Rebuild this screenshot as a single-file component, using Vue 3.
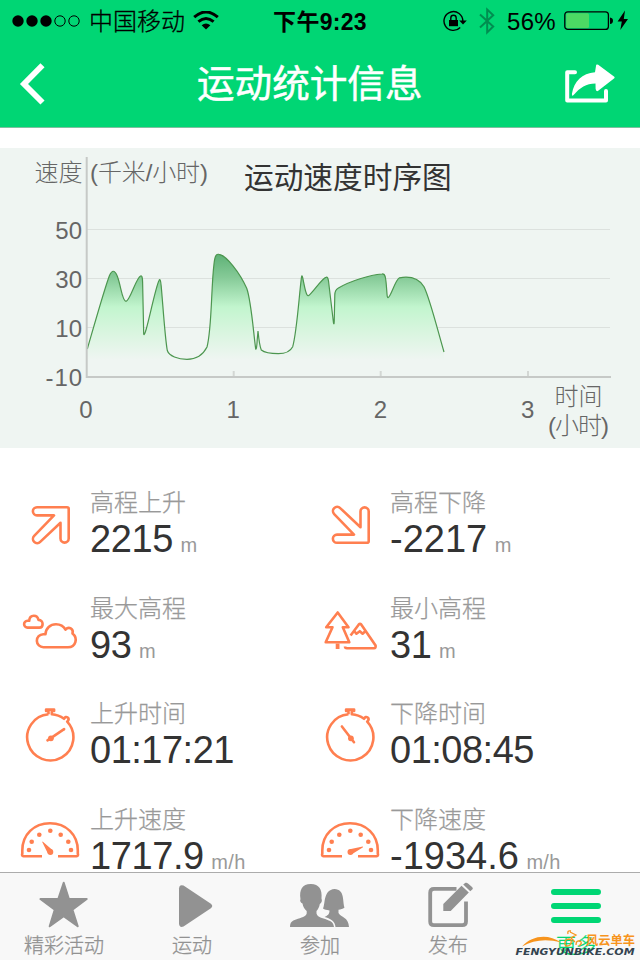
<template>
  <div class="screen">
    <header class="top">
      <div class="status-bar">
        <div class="status-left">
          <svg class="signal" width="68" height="12" viewBox="0 0 68 12">
            <circle v-for="n in 5" :key="n" :cx="6 + (n - 1) * 14" cy="6" :r="n < 4 ? 5.7 : 5.2" :class="n < 4 ? 'dot-on' : 'dot-off'" />
          </svg>
          <span class="carrier">中国移动</span>
          <svg class="wifi" width="26" height="20" viewBox="0 0 26 20">
            <path d="M1.2 6.2Q13-4.2 24.8 6.2M5.4 10.7Q13 4.4 20.6 10.7" />
            <path class="solid" d="M8.6 14.2Q13 10.8 17.4 14.2L13 18.6z" />
          </svg>
        </div>
        <div class="time">下午9:23</div>
        <div class="status-right">
          <svg width="24" height="22" viewBox="0 0 24 22" fill="none" stroke="#000" stroke-width="1.4">
            <path d="M17.2 17.5A9.4 9.4 0 1 1 19.8 11" />
            <path d="M16.2 10.4h7.6L20 14.4z" fill="#000" stroke="none" />
            <path d="M6 10h9v6.2H6z" fill="#000" stroke="none" />
            <path d="M7.8 10.5V8a2.7 2.7 0 0 1 5.4 0v2.5" />
          </svg>
          <svg class="bluetooth" width="16" height="28" viewBox="0 0 16 28">
            <path d="M1 7.5l13.2 12L8.2 25.4V2.6l6 5.6L1 20.5" />
          </svg>
          <span class="percent">56%</span>
          <svg class="battery" width="65" height="22" viewBox="0 0 65 22">
            <rect x=".8" y="1.8" width="43.6" height="17.6" rx="3" fill="none" stroke="#000" stroke-width="1.3" />
            <rect x="2.2" y="3.2" width="22.8" height="14.8" rx="1.5" fill="#4cd964" />
            <path d="M46 7.4q3 .5 3 3.300t-3 3.300z" />
            <path d="M61 .5L53.600 11.600h4.200L56.300 20 64 9h-4.200z" />
          </svg>
        </div>
      </div>
      <div class="nav-bar">
        <svg width="26" height="42" viewBox="0 0 26 42">
          <path d="M23.500 2.300L5 21l18.500 18.500" fill="none" stroke="#fff" stroke-width="5.800" />
        </svg>
        <h1>运动统计信息</h1>
        <svg width="52" height="42" viewBox="0 0 52 42">
          <path d="M11 9.200H3.200V37.400H42V28" fill="none" stroke="#fff" stroke-width="4" stroke-linecap="round" stroke-linejoin="round" />
          <path d="M32.200 1.800Q33.200 1 34.200 1.800L50.300 13.800Q51 14.500 50.300 15.200L34.200 27.800Q32 29 31.600 25.800L31.500 20.400C22 20.400 16 24.500 9.600 32Q7.600 34 8 30.500C10 18.500 18 10 31 9.200z" fill="#fff" />
        </svg>
      </div>
    </header>

    <main class="content">
      <section class="chart">
        <svg width="640" height="300" viewBox="0 0 640 300">
          <defs>
            <linearGradient id="speedFill" gradientUnits="userSpaceOnUse" x1="0" y1="106" x2="0" y2="212">
              <stop offset="0" stop-color="#5eb176" />
              <stop offset=".22" stop-color="#85ca97" />
              <stop offset=".5" stop-color="#c2f5ce" />
              <stop offset=".75" stop-color="#daf5e0" />
              <stop offset="1" stop-color="#eff5f2" />
            </linearGradient>
          </defs>
          <path v-for="tick in yTicks" :key="tick.label" class="grid-line" :d="`M87 ${tick.y}H610`" />
          <path :d="speedCurve + 'V226H87.300z'" fill="url(#speedFill)" />
          <path :d="speedCurve" class="curve" />
          <path class="axis" d="M86.700 9V229H611" />
          <path class="tick" d="M233.700 223v5M380.700 223v5M528 223v5" />
          <g class="axis-text" text-anchor="end">
            <text v-for="tick in yTicks" :key="tick.label" x="82" :y="tick.y + 9">{{ tick.label }}</text>
            <text x="82" y="238" textLength="36.500">-10</text>
          </g>
          <g class="axis-text" text-anchor="middle">
            <text v-for="n in 4" :key="n" :x="86 + (n - 1) * 147.2" y="270">{{ n - 1 }}</text>
            <text x="578.500" y="257">时间</text>
            <text x="578.500" y="286" textLength="61">(小时)</text>
          </g>
          <text class="axis-text" x="34.500" y="33">速度</text>
          <text class="axis-text" x="90" y="33" textLength="118">(千米/小时)</text>
          <text class="chart-title" x="244" y="40">运动速度时序图</text>
        </svg>
      </section>

      <section class="stats">
        <div v-for="item in stats" :key="item.label" class="stat">
          <svg class="stat-icon" width="60" height="60" viewBox="0 0 60 60">
            <g v-if="item.icon === 'up' || item.icon === 'down'" :transform="item.icon === 'down' ? 'translate(0 60) scale(1 -1)' : undefined">
              <path d="M17 12.200H47Q48.700 12.200 48.700 13.700V43.500a4.100 4.100 0 0 1-8.200 0V27.700L20.200 46.900a4.200 4.200 0 0 1-6-6L34 20.400H17a4.100 4.100 0 0 1 0-8.200z" />
            </g>
            <g v-else-if="item.icon === 'cloud'">
              <path d="M23.500 46.200a6.500 6.500 0 0 1-.3-13h2.300c.3-5.800 4.700-10 10.500-10 4.300 0 7.700 2 9.500 5.400 3.300-3.500 8.400-.8 7 4 5.600 4.500 3.500 13.600-4.500 13.600z" />
              <path d="M7.600 26.600a3.400 3.400 0 0 1-.2-6.800h1.800c.2-3 2-5 4.600-5s4.200 1.700 4.600 4.100c2.700-.1 4.200 1.800 4.200 4s-1.300 3.700-3.200 3.700z" />
            </g>
            <g v-else-if="item.icon === 'mountain'">
              <path d="M17.700 11.500L28.500 26.200H22.800L29.300 41.300H5.700L12.500 26.200H6.200z" />
              <path d="M17.600 42.500V48" class="trunk" />
              <path d="M30.600 34.500L38.800 23.500Q40 22.200 41.200 23.500L55.600 44.600Q56 47.100 54 47.200H27Q25 47.200 25 45.500M34.500 30.500l1.900 2.200 3.400-2.500 2.800 2.500 2.700-2.500" />
            </g>
            <g v-else-if="item.icon === 'watchUp' || item.icon === 'watchDown'">
              <path d="M28.500 8.300V5h-2.400V3.600h8V5h-2.300v3.300Q38.500 8.800 44 12.800q1.500-2.800 4-1.100 1.500 1.700-.8 3.900A23.100 23.100 0 1 1 28.500 8.300" />
              <circle cx="30.900" cy="32.300" r="2.900" class="solid" />
              <path :d="item.icon === 'watchUp' ? 'M27.500 34.300L44.100 23.200' : 'M34 36.200L21.900 20.500'" stroke-linecap="round" />
            </g>
            <g v-else>
              <path d="M22 44.300H3.500Q1.500 44 2.300 41.500V38.500C2.300 22.500 14 11.300 30 11.300S57.800 22.500 57.800 38.500v3q.8 2.500-1.300 2.800H38" />
              <circle v-for="(d, i) in gaugeDots" :key="i" :cx="d[0]" :cy="d[1]" r="2.300" class="solid" />
              <circle cx="30.400" cy="40" r="2.900" class="solid" />
              <path class="solid" :d="item.icon === 'gaugeUp' ? 'M28 41.700L22.200 29.900q.2-.8 1 0L32.700 38.300z' : 'M29.800 37.200L42.700 34.500q.7.600 0 1L32.200 42z'" />
            </g>
          </svg>
          <div class="stat-text">
            <div class="label">{{ item.label }}</div>
            <div class="value" :class="{ time: item.value.includes(':'), minus: item.value.startsWith('-') }">
              {{ item.value }}<span v-if="item.unit" class="unit">{{ item.unit }}</span>
            </div>
          </div>
        </div>
      </section>
    </main>

    <nav class="tab-bar">
      <a v-for="tab in tabs" :key="tab.name" class="tab" :class="{ active: tab.icon === 'more' }">
        <svg width="64" height="50" viewBox="0 0 64 50">
          <path v-if="tab.icon === 'star'" class="round" d="M31.700 2.800L36.900 19H54.700L40.400 29.600 45.700 46.300 31.700 36.200 17.700 46.300 22.800 29.600 8.400 19H26.300z" />
          <path v-else-if="tab.icon === 'play'" d="M19 8.500q.3-4.500 4.500-3L50.500 23.500q3.500 2.500 0 5L23.500 46.500q-4.200 1.500-4.500-3z" />
          <g v-else-if="tab.icon === 'people'">
            <path d="M2 47C2 42 4 41 8 39.500 13.500 37.500 18 36.500 18.700 33.500V31C16.500 29 15 26.500 14.500 23.500 12.500 23 11.500 20.500 12.500 19.300 11 9.500 14.500 4 22.500 4 30.500 3.700 34.500 9 33.500 18.500 34.500 21 33.500 23 31.800 24 31.300 27 30 29.500 28.500 31V33.500C29.500 37.500 34.500 38 39 39.700 44 41.500 45.500 43 46 47z" />
            <path d="M35 28.500C37.500 24 35 10 46.500 9 57 9.500 54.500 21 56.500 27.500 55 29 52.500 29.600 50.500 29.700V33C53 37.500 60.500 37 61 47H47.500C47 41 42 38.500 36.500 37 39.500 35.500 41.500 34.500 41.500 30.500 38.500 30 36.500 29.500 35 28.500z" />
          </g>
          <g v-else-if="tab.icon === 'edit'">
            <path class="line" d="M40.500 8.900H18Q14.200 8.900 14.200 12.700V41.400Q14.200 45.200 18 45.200H46.200Q50 45.200 50 41.400V21.500" />
            <path d="M27.300 31V24L45.500 5.700 52.800 12.500 34.700 31zM47.200 4.400L49.500 2.800Q50.700 2.300 52 3.400L56.300 7.200Q57.300 8.500 56.500 9.300L54.300 11.200z" />
          </g>
          <path v-else class="bars" d="M10 12H54M10 26H54M10 40H54" />
        </svg>
        <span>{{ tab.name }}</span>
      </a>
      <svg class="watermark" width="126" height="30" viewBox="0 0 126 30">
        <path d="M8 18.500C18 7.500 34 5.500 47 14.500 33 10.500 20 11.500 8 18.500z" fill="#f7941d" />
        <path d="M54 6q-1-4 3-3M56 4l6 3-5 3 4 4M51 17q-1-6 4-6 4 1 1 6-3 2-5 0M62 17q0-5 4-4 3 2-1 5" fill="none" stroke="#f7941d" stroke-width="1.300" />
        <text class="mark-cn" x="72" y="16.500" textLength="49" lengthAdjust="spacingAndGlyphs">风云单车</text>
        <text class="mark-en" x="1.500" y="26.700" textLength="119" lengthAdjust="spacingAndGlyphs">FENGYUNBIKE.COM</text>
      </svg>
    </nav>
  </div>
</template>

<script setup>
const yTicks = [
  { label: '50', y: 81.5 },
  { label: '30', y: 130.5 },
  { label: '10', y: 179.5 }
];

const speedCurve = [
  'M87.300 201C96 171 105 139 109.500 127.500Q113.300 119 117 127.500C121 137 122 153 126 153.300',
  'C130 153 136 130 140.500 128Q142.500 127 142.600 134L143.700 186C145 193 155 140 159 132.500Q160.500 129.500 161.200 138',
  'C163 158 165 190 167.300 202.500C169 208 178 211.300 187 211.300C196 211.300 203 207 207 199',
  'C212 180 211 140 214 116C215 106 217 106 219 106.300C226 107 240 125 246.700 140.300',
  'C251 152 253 180 255.700 201Q256.700 202 257.200 192L258 183Q259.500 198 261.300 202',
  'C265 205 272 205.700 278.300 205.700C286 205.700 290 204 292.700 198.700C297 183 299 148 301.500 129',
  'C302.500 122 305 149 308.300 147.700C312 146 322 130 326 129.300Q328 128.500 328.500 133L333.500 175',
  'Q334.300 178 334.300 170L334.800 147Q335 142 338 140.300C350 133 370 127 382 126Q384.500 125.700 385.300 129',
  'C387 137 386.500 150 388 149.700C391 149 395 132 399.500 129.800C407 128.500 418 129 424 138.700C430 151 437 180 444 204'
].join('');

const stats = [
  { icon: 'up', label: '高程上升', value: '2215', unit: 'm' },
  { icon: 'down', label: '高程下降', value: '-2217', unit: 'm' },
  { icon: 'cloud', label: '最大高程', value: '93', unit: 'm' },
  { icon: 'mountain', label: '最小高程', value: '31', unit: 'm' },
  { icon: 'watchUp', label: '上升时间', value: '01:17:21' },
  { icon: 'watchDown', label: '下降时间', value: '01:08:45' },
  { icon: 'gaugeUp', label: '上升速度', value: '1717.9', unit: 'm/h' },
  { icon: 'gaugeDown', label: '下降速度', value: '-1934.6', unit: 'm/h' }
];

const gaugeDots = [[9, 38], [11.7, 29.7], [19.3, 22.7], [30.3, 18.7], [40.7, 22.7], [48.3, 29.7], [51, 38]];

const tabs = [
  { icon: 'star', name: '精彩活动' },
  { icon: 'play', name: '运动' },
  { icon: 'people', name: '参加' },
  { icon: 'edit', name: '发布' },
  { icon: 'more', name: '更多' }
];
</script>

<style>
body {
  margin: 0;
  background: #fff;
}
</style>

<style scoped>
.screen {
  width: 640px;
  height: 960px;
  display: flex;
  flex-direction: column;
  overflow: hidden;
  background: #fff;
  font-family: "Liberation Sans", "Noto Sans CJK SC", sans-serif;
}

svg {
  display: block;
  flex: none;
}

.top {
  box-sizing: border-box;
  height: 128px;
  background: #00d674;
  border-bottom: 1px solid #80bfa0;
}

/* Status bar */
.status-bar {
  height: 40px;
  display: grid;
  grid-template-columns: 1fr auto 1fr;
  align-items: center;
  font-size: 24px;
  line-height: 40px;
}

.status-left,
.status-right {
  display: flex;
  align-items: center;
}

.status-left {
  padding-left: 12px;
}

.status-right {
  justify-content: flex-end;
  padding-right: 11px;
}

.dot-off {
  fill: none;
  stroke: #000;
  stroke-width: 1;
}

.carrier {
  margin-left: 9px;
  padding-top: 2px;
  font-weight: 300;
  -webkit-text-stroke: 0.3px;
}

.wifi {
  margin-left: 8px;
  fill: none;
  stroke: #000;
  stroke-width: 3;
}

.wifi .solid {
  fill: #000;
  stroke: none;
}

.status-bar .time {
  padding-top: 2px;
  font-weight: bold;
  font-size: 23px;
  letter-spacing: 0.3px;
}

.bluetooth {
  margin: 0 12px 0 12px;
  fill: none;
  stroke: #008d50;
  stroke-width: 2;
}

.percent {
  margin-right: 8px;
  padding-top: 1px;
  letter-spacing: 0.3px;
}

/* Navigation bar */
.nav-bar {
  height: 87px;
  padding: 0 24px 0 19px;
  display: flex;
  align-items: center;
}

.nav-bar h1 {
  margin: 0 auto 0 152px;
  color: #fff;
  font-size: 37.6px;
  font-weight: 400;
  line-height: 60px;
  -webkit-text-stroke: 0.5px;
}

.content {
  flex: 1;
  min-height: 0;
  padding-top: 20px;
  overflow: hidden;
}

/* Speed chart */
.chart {
  height: 300px;
  background: #eff5f2;
}

.grid-line {
  stroke: #dce1de;
  stroke-width: 1;
}

.axis {
  fill: none;
  stroke: #c6c9c7;
  stroke-width: 2;
}

.tick {
  stroke: #d3d7d4;
  stroke-width: 2;
}

.curve {
  fill: none;
  stroke: #4c964f;
  stroke-width: 1.2;
}

.axis-text {
  fill: #666;
  font-size: 24px;
  font-weight: 300;
}

.chart-title {
  fill: #333;
  font-size: 29.7px;
  -webkit-text-stroke: 0.3px #333;
}

/* Statistics */
.stats {
  display: grid;
  grid-template-columns: 300px 300px;
  grid-auto-rows: 105.5px;
  padding: 39px 20px 0;
}

.stat {
  display: flex;
  gap: 10px;
}

.stat-icon {
  margin-top: 8px;
  fill: none;
  stroke: #ff7f50;
  stroke-width: 2.6;
  stroke-linejoin: round;
}

.stat-icon .solid {
  fill: #ff7f50;
  stroke: none;
}

.stat-icon .trunk {
  stroke-width: 3.8;
}

.label {
  height: 31px;
  line-height: 31px;
  color: #999;
  font-size: 24px;
  font-weight: 300;
  -webkit-text-stroke: 0.25px;
}

.value {
  line-height: 42px;
  font-size: 38px;
  color: #333;
  white-space: nowrap;
  letter-spacing: -0.4px;
}

.value.time {
  letter-spacing: -0.5px;
}

.value.minus {
  letter-spacing: 0;
}

.unit {
  margin-left: 7.5px;
  font-size: 20px;
  letter-spacing: 0.3px;
  color: #999;
}

/* Bottom tabs */
.tab-bar {
  box-sizing: border-box;
  position: relative;
  height: 88px;
  display: grid;
  grid-template-columns: repeat(5, 1fr);
  border-top: 1px solid #acacac;
  background: #f8f8f8;
}

.tab {
  display: flex;
  flex-direction: column;
  align-items: center;
  padding-top: 7px;
  color: #929292;
  font-size: 20px;
  font-weight: 300;
  line-height: 33px;
}

.tab span {
  -webkit-text-stroke: 0.3px;
}

.tab svg {
  fill: currentColor;
}

.tab .line {
  fill: none;
  stroke: currentColor;
  stroke-width: 3.8;
}

.tab .round {
  stroke: currentColor;
  stroke-width: 2;
  stroke-linejoin: round;
}

.tab .bars {
  stroke: currentColor;
  stroke-width: 6;
  stroke-linecap: round;
}

.tab.active {
  color: #00d674;
}

.watermark {
  position: absolute;
  right: 0;
  bottom: 2px;
}

.mark-cn {
  fill: #f7941d;
  font-size: 12.5px;
  font-weight: bold;
}

.mark-en {
  fill: #33434f;
  font-family: "DejaVu Sans", sans-serif;
  font-size: 9.4px;
  font-weight: bold;
  font-style: italic;
}
</style>
